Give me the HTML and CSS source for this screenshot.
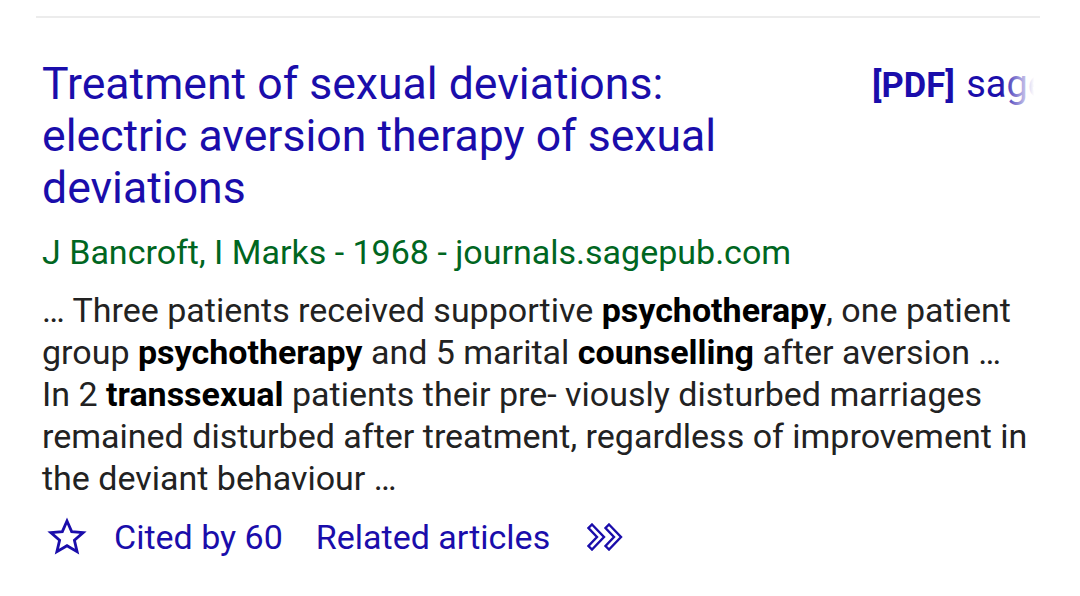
FILE: index.html
```html
<!DOCTYPE html>
<html>
<head>
<meta charset="utf-8">
<link rel="stylesheet" href="styles.css">
</head>
<body>
<div class="page">
  <div class="divider"></div>
  <div class="result">
    <div class="head">
      <h3 class="title">Treatment of sexual deviations: electric aversion therapy of sexual deviations</h3>
      <div class="pdf"><span class="tag">[PDF]</span> <span class="src">sagepub.com</span><span class="fade"></span></div>
    </div>
    <div class="meta">J Bancroft, I Marks - 1968 - journals.sagepub.com</div>
    <div class="snippet">… Three patients received supportive <b>psychotherapy</b>, one patient group <b>psychotherapy</b> and 5 marital <b>counselling</b> after aversion … In 2 <b>transsexual</b> patients their pre- viously disturbed marriages remained disturbed after treatment, regardless of improvement in the deviant behaviour …</div>
    <div class="actions">
      <svg class="star" viewBox="0 0 24 24" width="40" height="40"><path d="M12 2.4l2.8 6.4 6.9.6-5.25 4.55 1.6 6.85L12 17.25l-6.05 3.55 1.6-6.85L2.3 9.4l6.9-.6z" fill="none" stroke="#1a0dab" stroke-width="1.7" stroke-linejoin="miter"/></svg>
      <span class="link">Cited by 60</span>
      <span class="link">Related articles</span>
      <svg class="more" viewBox="0 0 38 28" width="38" height="28"><path d="M5 1.5L17 14 5 26.5 1.5 23 10 14 1.5 5z M22 1.5L34 14 22 26.5 18.5 23 27 14 18.5 5z" fill="none" stroke="#1a0dab" stroke-width="2.4" stroke-linejoin="miter"/></svg>
    </div>
  </div>
</div>
</body>
</html>
```
FILE: styles.css
```css
* { box-sizing: border-box; }
html, body { margin: 0; padding: 0; background: #fff; }
body { font-family: Roboto, "Noto Sans", Arial, sans-serif; }
.page { width: 1080px; height: 596px; overflow: hidden; padding: 16px 48px 0 42px; }
.divider { height: 2px; background: #ececec; margin-left: -6px; margin-right: -8px; }
.result { padding-top: 40px; }
.head { display: flex; justify-content: space-between; align-items: flex-start; margin-right: -4px; }
.title { margin: 0; font-weight: 400; font-size: 44.6px; line-height: 52px; color: #1a0dab; width: 740px; }
.pdf { position: relative; width: 164px; white-space: nowrap; overflow: hidden; color: #1a0dab; line-height: 52px; font-size: 38px; }
.pdf .tag { font-weight: 700; font-size: 34.5px; }
.pdf .src { margin-left: 2px; }
.pdf .fade { position: absolute; right: 0; top: 0; bottom: 0; width: 36px; background: linear-gradient(to right, rgba(255,255,255,0), #fff 95%); }
.meta { color: #006621; font-size: 34px; line-height: 42px; margin-top: 17px; }
.snippet { color: #222; font-size: 34px; line-height: 42px; margin-top: 16px; }
.snippet b { color: #000; }
.actions { display: flex; align-items: center; margin-top: 13px; height: 50px; color: #1a0dab; font-size: 34px; }
.star { margin-left: 5px; margin-right: 27px; }
.link { margin-right: 33px; }
.more { margin-left: 4px; }
```
